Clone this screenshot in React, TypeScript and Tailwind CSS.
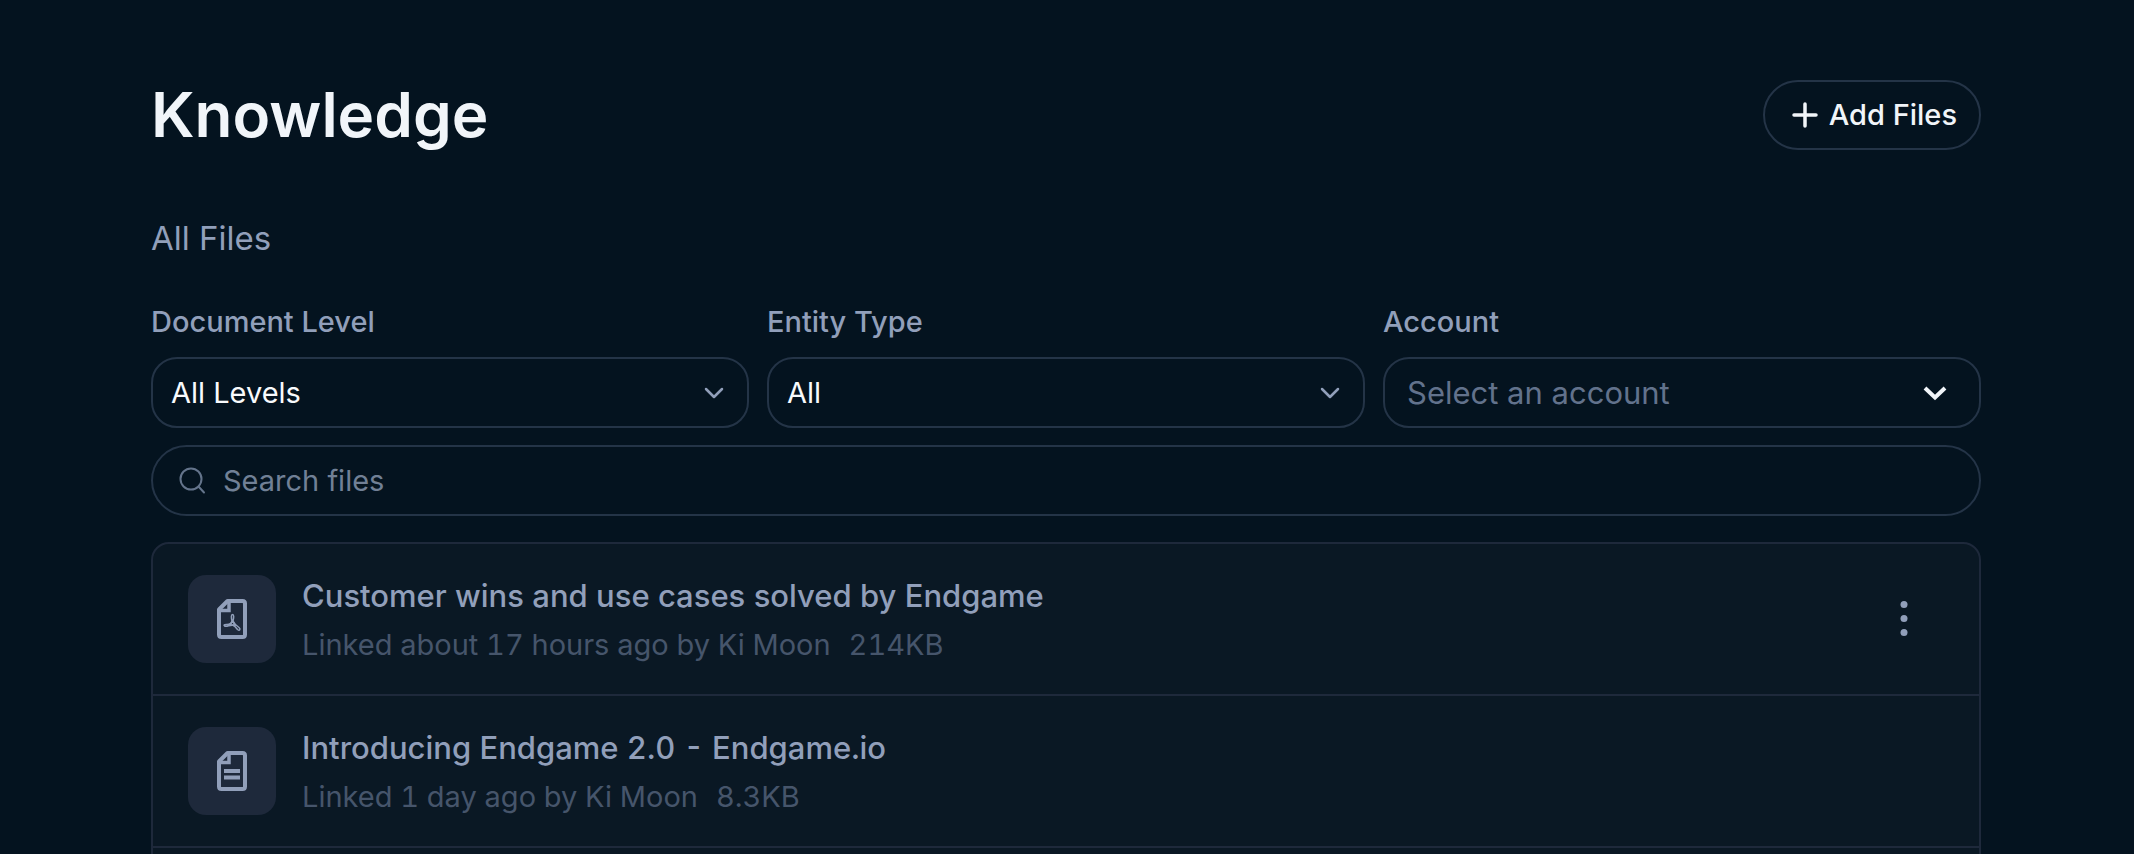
import { useState } from 'react';

type FileKind = 'pdf' | 'doc';

interface KnowledgeFile {
  id: string;
  kind: FileKind;
  title: string;
  linked: string;
  size: string;
  hasMenu?: boolean;
}

const files: KnowledgeFile[] = [
  {
    id: 'customer-wins',
    kind: 'pdf',
    title: 'Customer wins and use cases solved by Endgame',
    linked: 'Linked about 17 hours ago by Ki Moon',
    size: '214KB',
    hasMenu: true,
  },
  {
    id: 'introducing-endgame',
    kind: 'doc',
    title: 'Introducing Endgame 2.0 - Endgame.io',
    linked: 'Linked 1 day ago by Ki Moon',
    size: '8.3KB',
  },
];

function FileIcon({ kind }: { kind: FileKind }) {
  return (
    <svg width="30" height="40" viewBox="0 0 30 40" fill="none" stroke="currentColor" aria-hidden="true">
      <path d="M10.5 2H25.5Q28 2 28 4.500V35.500Q28 38 25.500 38H4.500Q2 38 2 35.500V10.500Z" strokeWidth="4" strokeLinejoin="round" />
      <path d="M12 3V11.500H3" strokeWidth="3.500" />
      {kind === 'doc' ? (
        <path d="M7 20H23M7 26.500H23" strokeWidth="4" />
      ) : (
        <g strokeWidth="1.500" strokeLinejoin="round">
          <path d="M15.500 15.500C17.200 15.500 16.800 18.500 16 22C17.500 25 19 26.500 22 28.500C24 30.500 22.500 32 20.500 30.500C19 28.500 17.500 26.800 16 26.300C13 25.800 10.500 27.800 8 27.300C6 26.300 7.500 25.200 10 25.500C13 25.500 14.500 24 15 22C14.200 19 14 15.500 15.500 15.500Z" />
          <path d="M15.500 22L13 26.500M15.500 22L18.500 27M12 26H18" />
        </g>
      )}
    </svg>
  );
}

interface FilterSelectProps {
  id: string;
  label: string;
  options: string[];
}

function FilterSelect({ id, label, options }: FilterSelectProps) {
  return (
    <div className="min-w-0 flex-1">
      <label htmlFor={id} className="block text-[29px] leading-9 font-medium text-[#919fba]">
        {label}
      </label>
      <div className="relative mt-[17px]">
        <select
          id={id}
          className="block h-[71px] w-full appearance-none rounded-[26px] border-2 border-[#243447] bg-transparent pr-16 pl-[18px] text-[29px] text-[#f8fafc]"
        >
          {options.map((option) => (
            <option key={option}>{option}</option>
          ))}
        </select>
        <svg
          className="pointer-events-none absolute inset-y-0 right-[25px] my-auto"
          width="20"
          height="12"
          viewBox="0 0 20 12"
          fill="none"
          stroke="#919fba"
          strokeWidth="2.500"
          strokeLinecap="round"
          strokeLinejoin="round"
          aria-hidden="true"
        >
          <path d="M2 2L10 10L18 2" />
        </svg>
      </div>
    </div>
  );
}

export default function App() {
  const [query, setQuery] = useState('');

  return (
    <main className="h-screen overflow-hidden bg-[#04131f] pt-20 pr-[153px] pl-[151px] font-['Inter',sans-serif] [font-optical-sizing:none]">
      {/* Page header */}
      <header className="flex items-center justify-between">
        <h1 className="text-[62px] leading-[70px] font-semibold text-[#f1f5f9]">Knowledge</h1>
        <button
          type="button"
          className="flex h-[70px] items-center gap-[10px] rounded-full border-2 border-[#243447] pr-[22px] pl-[26px] text-[29px] font-medium text-[#f1f5f9]"
        >
          <svg width="28" height="28" viewBox="0 0 28 28" stroke="currentColor" strokeWidth="3.500" strokeLinecap="round" aria-hidden="true">
            <path d="M14 3V25M3 14H25" />
          </svg>
          Add Files
        </button>
      </header>

      <h2 className="mt-[68px] text-[33px] leading-10 text-[#919fba]">All Files</h2>

      {/* Filters */}
      <div className="mt-[46px] flex gap-[18px]">
        <FilterSelect id="document-level" label="Document Level" options={['All Levels']} />
        <FilterSelect id="entity-type" label="Entity Type" options={['All']} />
        <div className="min-w-0 flex-1">
          <label htmlFor="account" className="block text-[29px] leading-9 font-medium text-[#919fba]">
            Account
          </label>
          <div className="relative mt-[17px]">
            <input
              id="account"
              type="text"
              placeholder="Select an account"
              className="block h-[71px] w-full rounded-[26px] border-2 border-[#243447] bg-transparent pr-20 pl-[22px] text-[31px] text-[#f8fafc] placeholder:text-[#62728c]"
            />
            <svg
              className="pointer-events-none absolute inset-y-0 right-[33px] my-auto"
              width="26"
              height="16"
              viewBox="0 0 26 16"
              fill="none"
              stroke="#f1f5f9"
              strokeWidth="4"
              aria-hidden="true"
            >
              <path d="M3 3L13 12.500L23 3" />
            </svg>
          </div>
        </div>
      </div>

      {/* Search */}
      <div className="relative mt-[17px]">
        <svg
          className="pointer-events-none absolute inset-y-0 left-7 my-auto"
          width="28"
          height="28"
          viewBox="0 0 28 28"
          fill="none"
          stroke="#64748b"
          strokeWidth="2"
          strokeLinecap="round"
          aria-hidden="true"
        >
          <circle cx="12" cy="12" r="10.500" />
          <path d="M19.500 19.500L25 25.500" />
        </svg>
        <input
          type="search"
          aria-label="Search files"
          placeholder="Search files"
          value={query}
          onChange={(e) => setQuery(e.target.value)}
          className="block h-[71px] w-full rounded-full border-2 border-[#243447] bg-transparent pr-8 pl-[70px] text-[29px] text-[#f8fafc] placeholder:text-[#718096]"
        />
      </div>

      {/* File list */}
      <ul className="mt-[26px] min-h-[400px] rounded-[18px] border-2 border-[#1e293b] bg-[#0a1824] tabular-nums">
        {files.map((file) => (
          <li key={file.id} className="flex items-center gap-[26px] border-b-2 border-[#1e293b] py-6 pr-[58px] pl-[35px]">
            <div className="flex h-[88px] w-[88px] shrink-0 items-center justify-center rounded-[18px] bg-[#1e293b] text-[#919fba]">
              <FileIcon kind={file.kind} />
            </div>
            <div className="min-w-0 flex-1 pt-1">
              <p className="truncate text-[31px] leading-[48px] font-medium text-[#919fba]">{file.title}</p>
              <p className="flex gap-[18px] text-[29px] leading-[50px] text-[#46556b]">
                <span>{file.linked}</span>
                <span>{file.size}</span>
              </p>
            </div>
            {file.hasMenu && (
              <button type="button" aria-label="File options" className="text-[#919fba]">
                <svg width="34" height="40" viewBox="0 0 34 40" fill="currentColor" aria-hidden="true">
                  <circle cx="17" cy="5.500" r="3.500" />
                  <circle cx="17" cy="19.500" r="3.500" />
                  <circle cx="17" cy="33.500" r="3.500" />
                </svg>
              </button>
            )}
          </li>
        ))}
      </ul>
    </main>
  );
}
